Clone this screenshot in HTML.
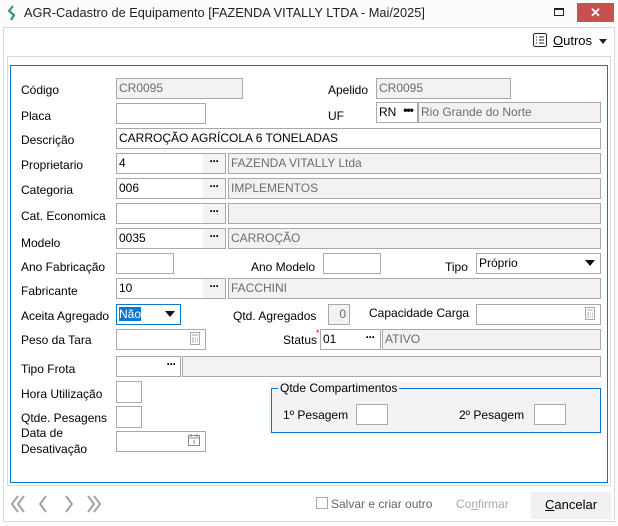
<!DOCTYPE html>
<html><head><meta charset="utf-8"><style>
*{box-sizing:border-box;margin:0;padding:0}
body{width:618px;height:526px;background:#fdfbfd;font-family:"Liberation Sans",sans-serif;font-size:12px;color:#000;position:relative;overflow:hidden}
.a{position:absolute}
.l{position:absolute;font-size:12px;white-space:nowrap}
.i{position:absolute;height:21px;border:1px solid #a9a9a9;background:#fff;font-size:12px;padding:2px 0 0 2px;white-space:nowrap;overflow:hidden}
.g{background:#f3f1f3;color:#6d6d6d}
.d{position:absolute;right:0;top:0;width:22px;height:19px;background:#f4f2f4;text-align:center;font-weight:bold;line-height:14px;letter-spacing:-1px}
</style></head><body>
<svg class="a" style="left:7px;top:5px" width="10" height="16" viewBox="0 0 10 16"><path d="M6 1 L2 6 L7 10 L4 15" fill="none" stroke="#2e9a7a" stroke-width="2.2"/></svg>
<div class="l" style="left:24px;top:5px;font-size:12.8px;color:#222">AGR-Cadastro de Equipamento [FAZENDA VITALLY LTDA - Mai/2025]</div>
<div class="a" style="left:554px;top:8px;width:10px;height:8px;border:1px solid #222;border-top-width:2px"></div>
<div class="a" style="left:577px;top:3px;width:37px;height:19px;background:#c75050;color:#fff;text-align:center;font-size:13px;font-weight:bold;line-height:19px">✕</div>
<div class="a" style="left:3px;top:27px;width:612px;height:495px;border:1px solid #d9d9d9;background:#fff"></div>
<svg class="a" style="left:532px;top:32px" width="16" height="16" viewBox="0 0 16 16"><rect x="1.5" y="1.5" width="13" height="13" rx="2" fill="none" stroke="#222"/><path d="M4 5h1M4 8h1M4 11h1M7 5h5M7 8h5M7 11h5" stroke="#222"/></svg>
<div class="l" style="left:553px;top:33px;font-size:13px"><u>O</u>utros</div>
<div class="a" style="left:599px;top:39px;border:4px solid transparent;border-top:5px solid #222"></div>
<div class="a" style="left:7px;top:56px;width:604px;height:430px;border:1px solid #d9d9d9"></div>
<div class="a" style="left:10px;top:65px;width:598px;height:418px;border:1.5px solid #0a78d0"></div>

<div class="l" style="left:21px;top:83px">Código</div>
<div class="i g" style="left:116px;top:78px;width:127px">CR0095</div>
<div class="l" style="left:328px;top:83px">Apelido</div>
<div class="i g" style="left:376px;top:78px;width:135px">CR0095</div>

<div class="l" style="left:21px;top:109px">Placa</div>
<div class="i" style="left:116px;top:103px;width:90px"></div>
<div class="l" style="left:328px;top:109px">UF</div>
<div class="i" style="left:376px;top:102px;width:42px">RN<span class="d" style="width:18px;background:#fff">•••</span></div>
<div class="i g" style="left:418px;top:102px;width:183px">Rio Grande do Norte</div>

<div class="l" style="left:21px;top:133px">Descrição</div>
<div class="i" style="left:116px;top:128px;width:485px">CARROÇÃO AGRÍCOLA 6 TONELADAS</div>

<div class="l" style="left:21px;top:158px">Proprietario</div>
<div class="i" style="left:116px;top:153px;width:110px">4<span class="d">···</span></div>
<div class="i g" style="left:228px;top:153px;width:373px">FAZENDA VITALLY Ltda</div>

<div class="l" style="left:21px;top:183px">Categoria</div>
<div class="i" style="left:116px;top:178px;width:110px">006<span class="d">···</span></div>
<div class="i g" style="left:228px;top:178px;width:373px">IMPLEMENTOS</div>

<div class="l" style="left:21px;top:209px">Cat. Economica</div>
<div class="i" style="left:116px;top:203px;width:110px"><span class="d">···</span></div>
<div class="i g" style="left:228px;top:203px;width:373px"></div>

<div class="l" style="left:21px;top:236px">Modelo</div>
<div class="i" style="left:116px;top:228px;width:110px">0035<span class="d">···</span></div>
<div class="i g" style="left:228px;top:228px;width:373px">CARROÇÃO</div>

<div class="l" style="left:21px;top:260px">Ano Fabricação</div>
<div class="i" style="left:116px;top:253px;width:58px"></div>
<div class="l" style="left:251px;top:260px">Ano Modelo</div>
<div class="i" style="left:323px;top:253px;width:58px"></div>
<div class="l" style="left:445px;top:260px">Tipo</div>
<div class="i" style="left:476px;top:253px;width:125px">Próprio</div>
<div class="a" style="left:585px;top:260px;border:5px solid transparent;border-top:6px solid #111"></div>

<div class="l" style="left:21px;top:284px">Fabricante</div>
<div class="i" style="left:116px;top:278px;width:110px">10<span class="d">···</span></div>
<div class="i g" style="left:228px;top:278px;width:373px">FACCHINI</div>

<div class="l" style="left:21px;top:309px">Aceita Agregado</div>
<div class="i" style="left:116px;top:304px;width:65px;border-color:#0a78d0;padding:2px 0 0 2px"><span style="background:#0a78d0;color:#fff">Não</span></div>
<div class="a" style="left:165px;top:311px;border:5px solid transparent;border-top:6px solid #111"></div>
<div class="l" style="left:233px;top:309px">Qtd. Agregados</div>
<div class="i g" style="left:328px;top:304px;width:22px;text-align:right;padding-right:3px">0</div>
<div class="l" style="left:369px;top:306px">Capacidade Carga</div>
<div class="i" style="left:476px;top:304px;width:125px"></div>
<svg class="a" style="left:584px;top:307px" width="12" height="14"><rect x="1.5" y="0.5" width="9" height="12" fill="none" stroke="#aaa"/><path d="M3 3h6M3 6h2M6 6h1M8 6h1M3 8h2M6 8h1M8 8h1M3 10h2M6 10h1M8 10h1" stroke="#aaa"/></svg>

<div class="l" style="left:21px;top:333px">Peso da Tara</div>
<div class="i" style="left:116px;top:329px;width:90px"></div>
<svg class="a" style="left:189px;top:332px" width="12" height="14"><rect x="1.5" y="0.5" width="9" height="12" fill="none" stroke="#aaa"/><path d="M3 3h6M3 6h2M6 6h1M8 6h1M3 8h2M6 8h1M8 8h1M3 10h2M6 10h1M8 10h1" stroke="#aaa"/></svg>
<div class="l" style="left:283px;top:333px">Status</div>
<div class="l" style="left:316px;top:328px;color:#e00;font-size:9px">*</div>
<div class="i" style="left:320px;top:329px;width:61px">01<span class="d" style="width:20px;background:#fff">···</span></div>
<div class="i g" style="left:382px;top:329px;width:219px">ATIVO</div>

<div class="l" style="left:21px;top:362px">Tipo Frota</div>
<div class="i" style="left:116px;top:356px;width:65px"><span class="d" style="width:18px;background:#fff">···</span></div>
<div class="i g" style="left:182px;top:356px;width:419px"></div>

<div class="l" style="left:21px;top:387px">Hora Utilização</div>
<div class="i" style="left:116px;top:381px;width:26px;height:22px"></div>
<div class="l" style="left:21px;top:411px">Qtde. Pesagens</div>
<div class="i" style="left:116px;top:406px;width:26px;height:22px"></div>
<div class="l" style="left:21px;top:425px;line-height:16px">Data de<br>Desativação</div>
<div class="i" style="left:116px;top:431px;width:90px"></div>
<svg class="a" style="left:187px;top:433px" width="14" height="14"><rect x="1.5" y="2.5" width="11" height="10" fill="none" stroke="#888"/><path d="M2 5h10M4 1v3M10 1v3M7 7v4" stroke="#888"/></svg>

<div class="a" style="left:269px;top:382px;width:333px;height:52px;background:#f4f2f4"></div>
<div class="a" style="left:271px;top:388px;width:330px;height:45px;border:1px solid #0a78d0"></div>
<div class="l" style="left:278px;top:381px;background:#f4f2f4;padding:0 2px">Qtde Compartimentos</div>
<div class="l" style="left:283px;top:408px">1º Pesagem</div>
<div class="i" style="left:356px;top:404px;width:32px;height:21px"></div>
<div class="l" style="left:459px;top:408px">2º Pesagem</div>
<div class="i" style="left:534px;top:404px;width:32px;height:21px"></div>

<svg class="a" style="left:10px;top:494px" width="100" height="20" viewBox="0 0 100 20"><g fill="none" stroke="#999" stroke-width="1.8"><path d="M8 2 L2 10 L8 18M14 2 L8 10 L14 18M36 2 L30 10 L36 18M56 2 L62 10 L56 18M78 2 L84 10 L78 18M84 2 L90 10 L84 18"/></g></svg>
<div class="a" style="left:316px;top:497px;width:12px;height:12px;border:1px solid #aaa;background:#fff"></div>
<div class="l" style="left:331px;top:497px;color:#666">Salvar e criar outro</div>
<div class="l" style="left:456px;top:497px;color:#aaa">Co<u>n</u>firmar</div>
<div class="a" style="left:531px;top:492px;width:80px;height:27px;background:#f2f0f2"></div>
<div class="l" style="left:545px;top:497px;font-size:13px"><u>C</u>ancelar</div>
</body></html>
